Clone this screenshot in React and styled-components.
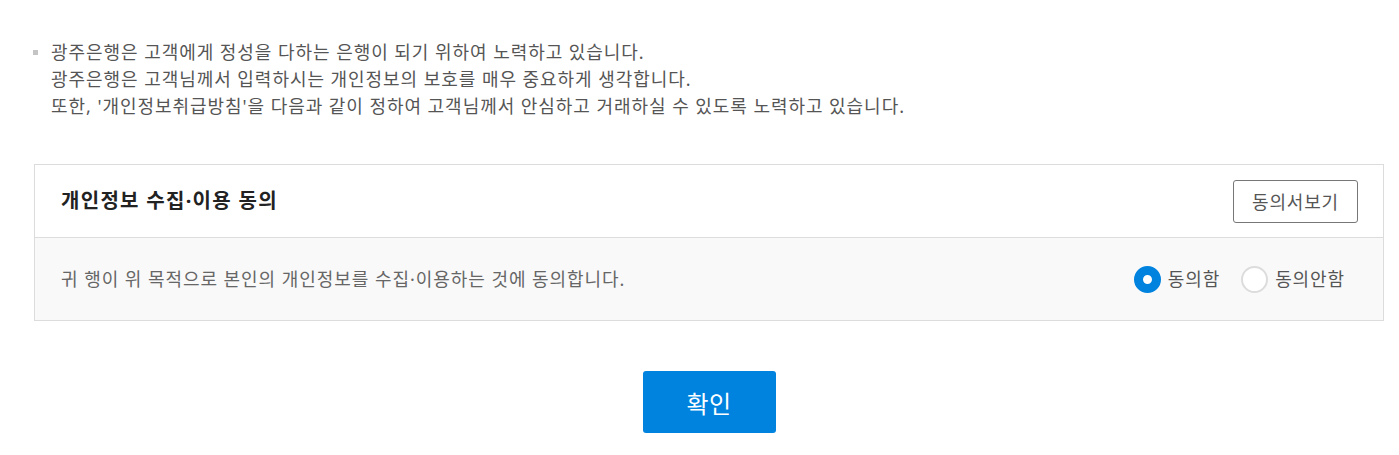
import React, { useState } from "react";
import styled, { createGlobalStyle, css } from "styled-components";

const GlobalStyle = createGlobalStyle`
  html, body {
    margin: 0;
    padding: 0;
    background: #fff;
  }
  body {
    font-family: "Noto Sans", "Noto Sans CJK KR", sans-serif;
    color: #333;
  }
`;

const Page = styled.div`
  width: 1350px;
  margin-left: 34px;
  padding-top: 39px;
`;

const IntroList = styled.ul`
  list-style: none;
  margin: 0;
  padding: 0;
`;

const IntroItem = styled.li`
  position: relative;
  padding-left: 17px;
  font-size: 18px;
  line-height: 27px;
  color: #555;
  letter-spacing: 0.95px;

  &::before {
    content: "";
    position: absolute;
    left: -1px;
    top: 11px;
    width: 5px;
    height: 5px;
    background: #c4c4c4;
  }
`;

const Panel = styled.section`
  margin-top: 44px;
  border: 1px solid #dcdcdc;
`;

const PanelHead = styled.div`
  display: flex;
  align-items: center;
  justify-content: space-between;
  height: 72px;
  padding: 0 25px 0 26px;
  border-bottom: 1px solid #dcdcdc;
`;

const PanelTitle = styled.h3`
  margin: 0;
  font-size: 20px;
  line-height: 30px;
  font-weight: 700;
  letter-spacing: 1.3px;
  color: #222;
`;

const OutlineButton = styled.button`
  width: 125px;
  height: 43px;
  border: 1px solid #777;
  border-radius: 3px;
  background: #fff;
  font-family: inherit;
  font-size: 18px;
  letter-spacing: 0.8px;
  color: #555;
  cursor: pointer;
`;

const PanelBody = styled.div`
  display: flex;
  align-items: center;
  justify-content: space-between;
  height: 82px;
  padding: 0 38px 0 26px;
  background: #f9f9f9;
  font-size: 18px;
  line-height: 27px;
  letter-spacing: 0.95px;
  color: #666;
`;

const RadioGroup = styled.div`
  display: flex;
  align-items: center;
  gap: 21px;
`;

const RadioLabel = styled.label`
  display: flex;
  align-items: center;
  gap: 7px;
  font-size: 18px;
  letter-spacing: 0.9px;
  color: #555;
  cursor: pointer;
`;

const RadioMark = styled.span`
  box-sizing: border-box;
  width: 27px;
  height: 27px;
  border-radius: 50%;
  background: #fff;
  ${(props) =>
    props.$checked
      ? css`
          border: 9px solid #0083df;
        `
      : css`
          border: 2px solid #dcdcdc;
        `}
`;

const HiddenInput = styled.input`
  display: none;
`;

const Actions = styled.div`
  display: flex;
  justify-content: center;
  margin-top: 50px;
`;

const PrimaryButton = styled.button`
  width: 133px;
  height: 62px;
  border: none;
  border-radius: 3px;
  background: #0083df;
  color: #fff;
  font-family: inherit;
  font-size: 24px;
  letter-spacing: 0.5px;
  cursor: pointer;
`;

export default function App() {
  const [agree, setAgree] = useState("yes");

  return (
    <>
      <GlobalStyle />
      <Page>
        <IntroList>
          <IntroItem>
            광주은행은 고객에게 정성을 다하는 은행이 되기 위하여 노력하고 있습니다.
            <br />
            광주은행은 고객님께서 입력하시는 개인정보의 보호를 매우 중요하게 생각합니다.
            <br />
            또한, '개인정보취급방침'을 다음과 같이 정하여 고객님께서 안심하고 거래하실 수 있도록 노력하고 있습니다.
          </IntroItem>
        </IntroList>

        <Panel>
          <PanelHead>
            <PanelTitle>개인정보 수집·이용 동의</PanelTitle>
            <OutlineButton type="button">동의서보기</OutlineButton>
          </PanelHead>
          <PanelBody>
            <span>귀 행이 위 목적으로 본인의 개인정보를 수집·이용하는 것에 동의합니다.</span>
            <RadioGroup>
              <RadioLabel>
                <HiddenInput
                  type="radio"
                  name="agree"
                  checked={agree === "yes"}
                  onChange={() => setAgree("yes")}
                />
                <RadioMark $checked={agree === "yes"} />
                동의함
              </RadioLabel>
              <RadioLabel>
                <HiddenInput
                  type="radio"
                  name="agree"
                  checked={agree === "no"}
                  onChange={() => setAgree("no")}
                />
                <RadioMark $checked={agree === "no"} />
                동의안함
              </RadioLabel>
            </RadioGroup>
          </PanelBody>
        </Panel>

        <Actions>
          <PrimaryButton type="button">확인</PrimaryButton>
        </Actions>
      </Page>
    </>
  );
}
